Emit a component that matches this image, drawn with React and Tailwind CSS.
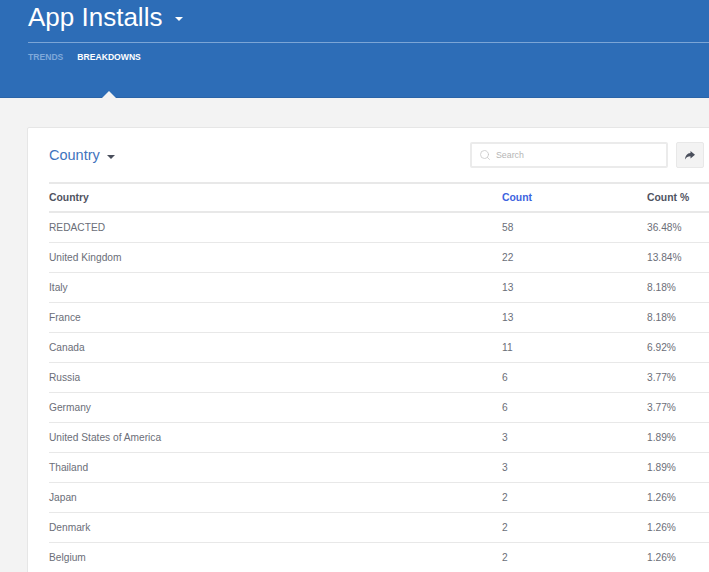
import { Search } from 'lucide-react'

const rows = [
  ['REDACTED', '58', '36.48%'],
  ['United Kingdom', '22', '13.84%'],
  ['Italy', '13', '8.18%'],
  ['France', '13', '8.18%'],
  ['Canada', '11', '6.92%'],
  ['Russia', '6', '3.77%'],
  ['Germany', '6', '3.77%'],
  ['United States of America', '3', '1.89%'],
  ['Thailand', '3', '1.89%'],
  ['Japan', '2', '1.26%'],
  ['Denmark', '2', '1.26%'],
  ['Belgium', '2', '1.26%'],
]

function Caret({ className }) {
  return (
    <svg className={className} width="8" height="4" viewBox="0 0 8 4">
      <path d="M0 0h8L4 4z" fill="currentColor" />
    </svg>
  )
}

export default function App() {
  return (
    <div className="h-[572px] w-[709px] overflow-hidden bg-[#f3f3f3] font-['Liberation_Sans',sans-serif]">
      <header className="relative h-[98px] border-b border-b-[#2a64a8] bg-[#2d6db7] pl-[28px]">
        <div className="flex h-[42px] items-center pb-[7px]">
          <h1 className="text-[26px] leading-[33px] text-white">App Installs</h1>
          <Caret className="ml-[13px] mt-[3px] text-white" />
        </div>
        <div className="h-px bg-[#7ba5d6]" />
        <nav className="flex gap-[14px] pt-[8px] text-[8.6px] font-bold leading-[12px]">
          <span className="text-[#7fa9da]">TRENDS</span>
          <span className="text-white">BREAKDOWNS</span>
        </nav>
        <div className="absolute bottom-[-1px] left-[102px] h-0 w-0 border-x-[7px] border-b-[7px] border-x-transparent border-b-[#f3f3f3]" />
      </header>

      <main className="pl-[27px] pt-[29px]">
        <section className="w-[720px] rounded-[2px] border border-[#e6e6e6] bg-white pl-[21px]">
          <div className="flex h-[54px] w-[655px] items-center">
            <h2 className="mt-[2px] text-[14.5px] text-[#3f74bd]">Country</h2>
            <Caret className="ml-[7px] mt-[4px] text-[#4a4f5c]" />
            <div className="ml-auto flex h-[26px] w-[198px] items-center gap-[5px] rounded-[2px] border-2 border-[#ebebeb] px-[7px]">
              <Search size={12} strokeWidth={1.5} className="text-[#c4c4c4]" />
              <span className="mt-[1px] text-[8.8px] text-[#b5b5b5]">Search</span>
            </div>
            <button className="ml-[8px] flex h-[26px] w-[28px] items-center justify-center rounded-[2px] border border-[#e8e8e8] bg-[#f3f3f3]">
              <svg width="10" height="9" viewBox="0 0 10 9">
                <path d="M5.500 0L10 3.700 5.500 7.400V5.200C3 5.200 1.300 6 0 8.500.2 4.800 2.200 2.300 5.500 2z" fill="#4a4f5c" />
              </svg>
            </button>
          </div>

          <div className="grid h-[31px] grid-cols-[453px_145px_1fr] items-center border-y-2 border-y-[#e8e8e8] text-[10.4px] font-bold text-[#50535f]">
            <span>Country</span>
            <span className="text-[#3d63e0]">Count</span>
            <span>Count %</span>
          </div>
          {rows.map(([country, count, pct]) => (
            <div key={country} className="grid h-[30px] grid-cols-[453px_145px_1fr] items-center border-b border-b-[#e8e8e8] text-[10.2px] text-[#6b6e78]">
              <span>{country}</span>
              <span>{count}</span>
              <span>{pct}</span>
            </div>
          ))}
        </section>
      </main>
    </div>
  )
}
